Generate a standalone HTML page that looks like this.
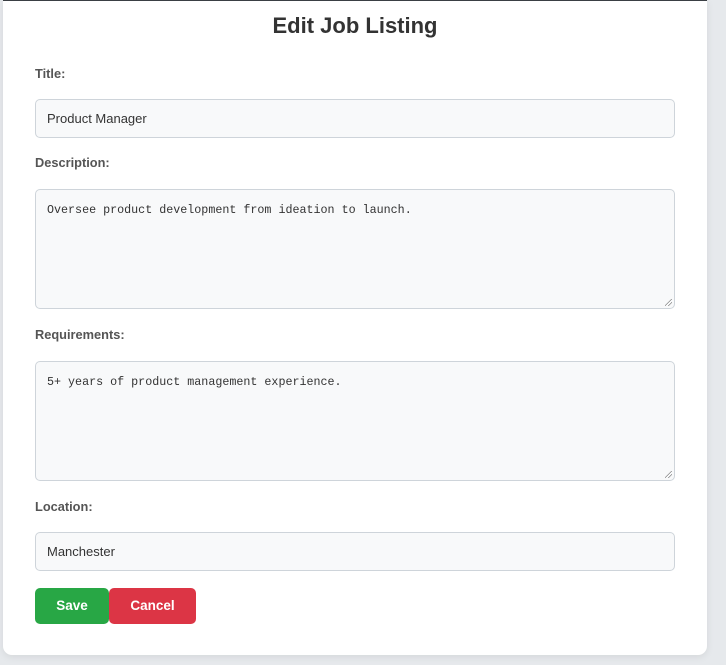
<!DOCTYPE html>
<html><head><style>
html,body{margin:0;padding:0;width:726px;height:665px;overflow:hidden;background:#e6e9ec;font-family:"Liberation Sans",sans-serif;}
.card{position:absolute;left:3px;top:0;width:704px;height:655px;background:#fff;border-top:1px solid #3a3f44;border-radius:0 0 9px 9px;box-shadow:0 2px 8px rgba(0,0,0,0.08);box-sizing:border-box;}
h1{position:absolute;left:0;width:704px;top:12px;margin:0;text-align:center;font-size:22px;font-weight:bold;color:#333;}
.lbl{position:absolute;left:32px;font-size:12.8px;font-weight:bold;color:#555;}
.in{position:absolute;left:32px;width:640px;box-sizing:border-box;background:#f8f9fa;border:1px solid #ced4da;border-radius:5px;color:#333;}
.in.t{height:39px;font-size:13px;padding:11px 11px;}
.in.a{height:120px;font-family:"Liberation Mono",monospace;font-size:11.7px;padding:13px 11px;}
.in.a::after{content:"";position:absolute;right:2px;bottom:2px;width:7px;height:7px;background:linear-gradient(135deg,transparent 45%,#888 45%,#888 52%,transparent 52%,transparent 70%,#888 70%,#888 77%,transparent 77%);}
.btn{position:absolute;top:587px;height:36px;color:#fff;font-size:13.5px;font-weight:bold;text-align:center;line-height:36px;border-radius:5px;}
</style></head><body>
<div class="card">
<h1>Edit Job Listing</h1>
<div class="lbl" style="top:65px">Title:</div>
<div class="in t" style="top:98px">Product Manager</div>
<div class="lbl" style="top:154px">Description:</div>
<div class="in a" style="top:188px">Oversee product development from ideation to launch.</div>
<div class="lbl" style="top:326px">Requirements:</div>
<div class="in a" style="top:360px">5+ years of product management experience.</div>
<div class="lbl" style="top:498px">Location:</div>
<div class="in t" style="top:531px">Manchester</div>
<div class="btn" style="left:32px;width:74px;background:#28a745;">Save</div>
<div class="btn" style="left:106px;width:87px;background:#dc3545;">Cancel</div>
</div>
</body></html>
